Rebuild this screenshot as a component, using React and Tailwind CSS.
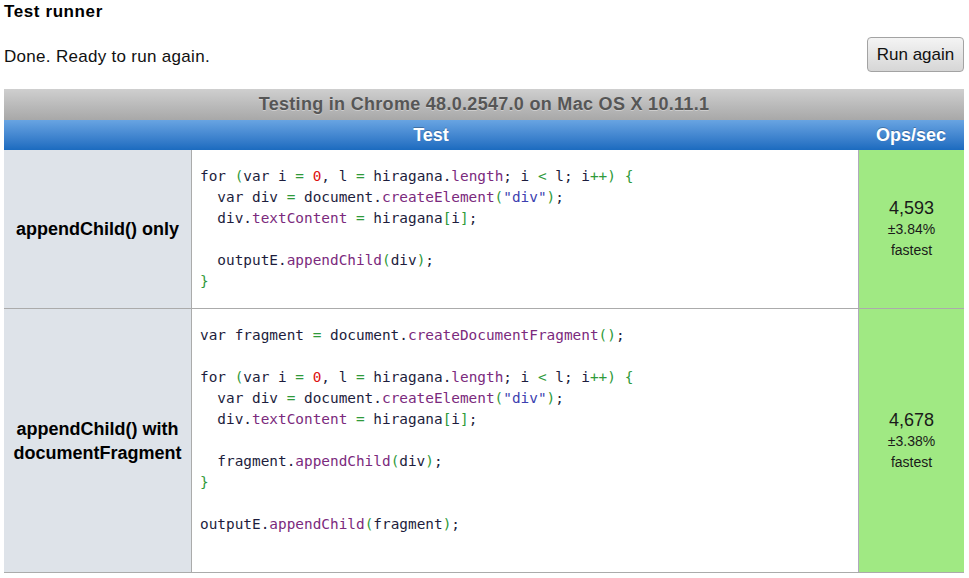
import React from "react";

const sans = { fontFamily: '"Liberation Sans", Arial, sans-serif' };

const code1 = [
  "for (var i = 0, l = hiragana.length; i < l; i++) {",
  '  var div = document.createElement("div");',
  "  div.textContent = hiragana[i];",
  "",
  "  outputE.appendChild(div);",
  "}",
];

const code2 = [
  "var fragment = document.createDocumentFragment();",
  "",
  "for (var i = 0, l = hiragana.length; i < l; i++) {",
  '  var div = document.createElement("div");',
  "  div.textContent = hiragana[i];",
  "",
  "  fragment.appendChild(div);",
  "}",
  "",
  "outputE.appendChild(fragment);",
  "",
];

// tiny highlighter, just enough for these snippets
const tokenize = (line) => {
  const out = [];
  const re = /("[^"]*")|\.([A-Za-z_]+)|(\d+)|([()\[\]{}=<+]+)|([^"\.\d()\[\]{}=<+]+|\.)/g;
  let m;
  while ((m = re.exec(line))) {
    if (m[1]) out.push([m[1], "str"]);
    else if (m[2]) {
      out.push([".", "txt"]);
      out.push([m[2], "prop"]);
    } else if (m[3]) out.push([m[3], "num"]);
    else if (m[4]) out.push([m[4], "punc"]);
    else out.push([m[5], "txt"]);
  }
  return out;
};

const colors = {
  txt: "text-[#1d1d3d]",
  str: "text-[#3c3fb0]",
  prop: "text-[#7b2a7d]",
  num: "text-[#dd1111]",
  punc: "text-[#2f9a3a]",
};

const Code = ({ lines }) => (
  <pre
    className="text-[14.4px] leading-[21px] whitespace-pre"
    style={{ fontFamily: '"DejaVu Sans Mono", Menlo, monospace' }}
  >
    {lines.map((line, i) => (
      <div key={i} className="h-[21px]">
        {tokenize(line).map(([t, k], j) => (
          <span key={j} className={colors[k]}>
            {t}
          </span>
        ))}
      </div>
    ))}
  </pre>
);

const Row = ({ name, lines, ops, rme }) => (
  <div className="grid grid-cols-[187px_667px_106px] border-b border-[#ababab]">
    <div className="bg-[#dee3e9] flex items-center justify-center text-center text-[18px] leading-[24px] font-bold text-black px-2">
      {name}
    </div>
    <div className="border-l border-[#ababab] bg-white pl-[8px] pt-[16px] pb-[16px]">
      <Code lines={lines} />
    </div>
    <div className="border-l border-[#b0a9bd] bg-[#a0e983] flex flex-col items-center justify-center text-[#1a1a1a]">
      <div className="text-[18px] leading-[21px]">{ops}</div>
      <div className="text-[14px] leading-[21px]">{rme}</div>
      <div className="text-[14px] leading-[20px]">fastest</div>
    </div>
  </div>
);

export default function App() {
  return (
    <div className="bg-white min-h-screen px-[4px]" style={sans}>
      <h1 className="pt-[1px] h-[22px] text-[17px] leading-[22px] font-bold tracking-[0.6px] text-black">
        Test runner
      </h1>
      <div className="mt-[15px] flex items-center justify-between">
        <p className="mt-[5px] text-[17px] tracking-[0.3px] text-[#111]">
          Done. Ready to run again.
        </p>
        <button className="h-[35px] w-[97px] mr-[1px] rounded-[4px] border border-[#a3a3a3] bg-gradient-to-b from-[#f4f4f4] to-[#d6d6d6] text-[17px] text-[#111]">
          Run again
        </button>
      </div>

      <div className="mt-[17px] w-[960px]">
        <div className="h-[31px] bg-gradient-to-b from-[#cfcfcf] to-[#a8a8a8] flex items-center justify-center text-[18px] font-bold tracking-[0.3px] text-[#565656] [text-shadow:0_1px_0_rgba(255,255,255,0.35)]">
          Testing in Chrome 48.0.2547.0 on Mac OS X 10.11.1
        </div>
        <div className="h-[30px] bg-gradient-to-b from-[#68a4e2] to-[#1b6bbf] grid grid-cols-[854px_106px] text-white text-[18px] font-bold [text-shadow:0_-1px_0_rgba(0,0,0,0.25)]">
          <div className="flex items-center justify-center">Test</div>
          <div className="flex items-center justify-center">Ops/sec</div>
        </div>
        <Row
          name="appendChild() only"
          lines={code1}
          ops="4,593"
          rme="±3.84%"
        />
        <Row
          name={
            <>
              appendChild() with
              <br />
              documentFragment
            </>
          }
          lines={code2}
          ops="4,678"
          rme="±3.38%"
        />
      </div>
    </div>
  );
}
